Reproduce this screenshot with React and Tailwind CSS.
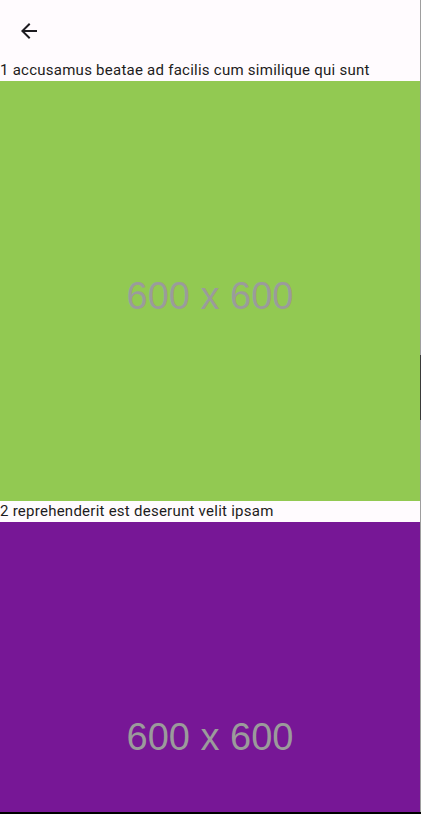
export default function App() {
  const photos = [
    { id: 1, title: 'accusamus beatae ad facilis cum similique qui sunt', color: 'bg-[#92c952]' },
    { id: 2, title: 'reprehenderit est deserunt velit ipsam', color: 'bg-[#771796]' },
  ]

  return (
    <div className="w-[421px] h-[814px] overflow-hidden bg-black flex flex-col" style={{ fontFamily: 'Roboto, sans-serif' }}>
      <div className="flex h-[812px]">
        <div className="w-[420px] h-[812px] overflow-hidden bg-[#fffbfe] flex flex-col">
          {/* App bar */}
          <div className="h-[60px] shrink-0 flex items-center pl-[17px] pt-[2px]">
            <svg width="24" height="24" viewBox="0 0 24 24" fill="#1d1b20">
              <path d="M20 11H7.83l5.59-5.59L12 4l-8 8 8 8 1.41-1.41L7.83 13H20v-2z" />
            </svg>
          </div>

          {photos.map(p => (
            <div key={p.id} className="shrink-0">
              <p className="h-[21px] text-[15px] leading-[21px] tracking-[0.25px] text-[#1d1b20] whitespace-nowrap">
                {p.id} {p.title}
              </p>
              <div className={`w-[420px] h-[420px] ${p.color} flex items-center justify-center`}>
                <span className="text-[38px] leading-none text-[#9b9b9b] pt-[10px]" style={{ fontFamily: '"Liberation Sans", Arial, sans-serif' }}>
                  600 x 600
                </span>
              </div>
            </div>
          ))}
        </div>
        {/* scrollbar-ish edge */}
        <div className="w-px h-[812px] bg-[#9e9e9e] flex flex-col">
          <div className="h-[355px]" />
          <div className="h-[65px] bg-[#3a3a3a]" />
        </div>
      </div>
    </div>
  )
}
